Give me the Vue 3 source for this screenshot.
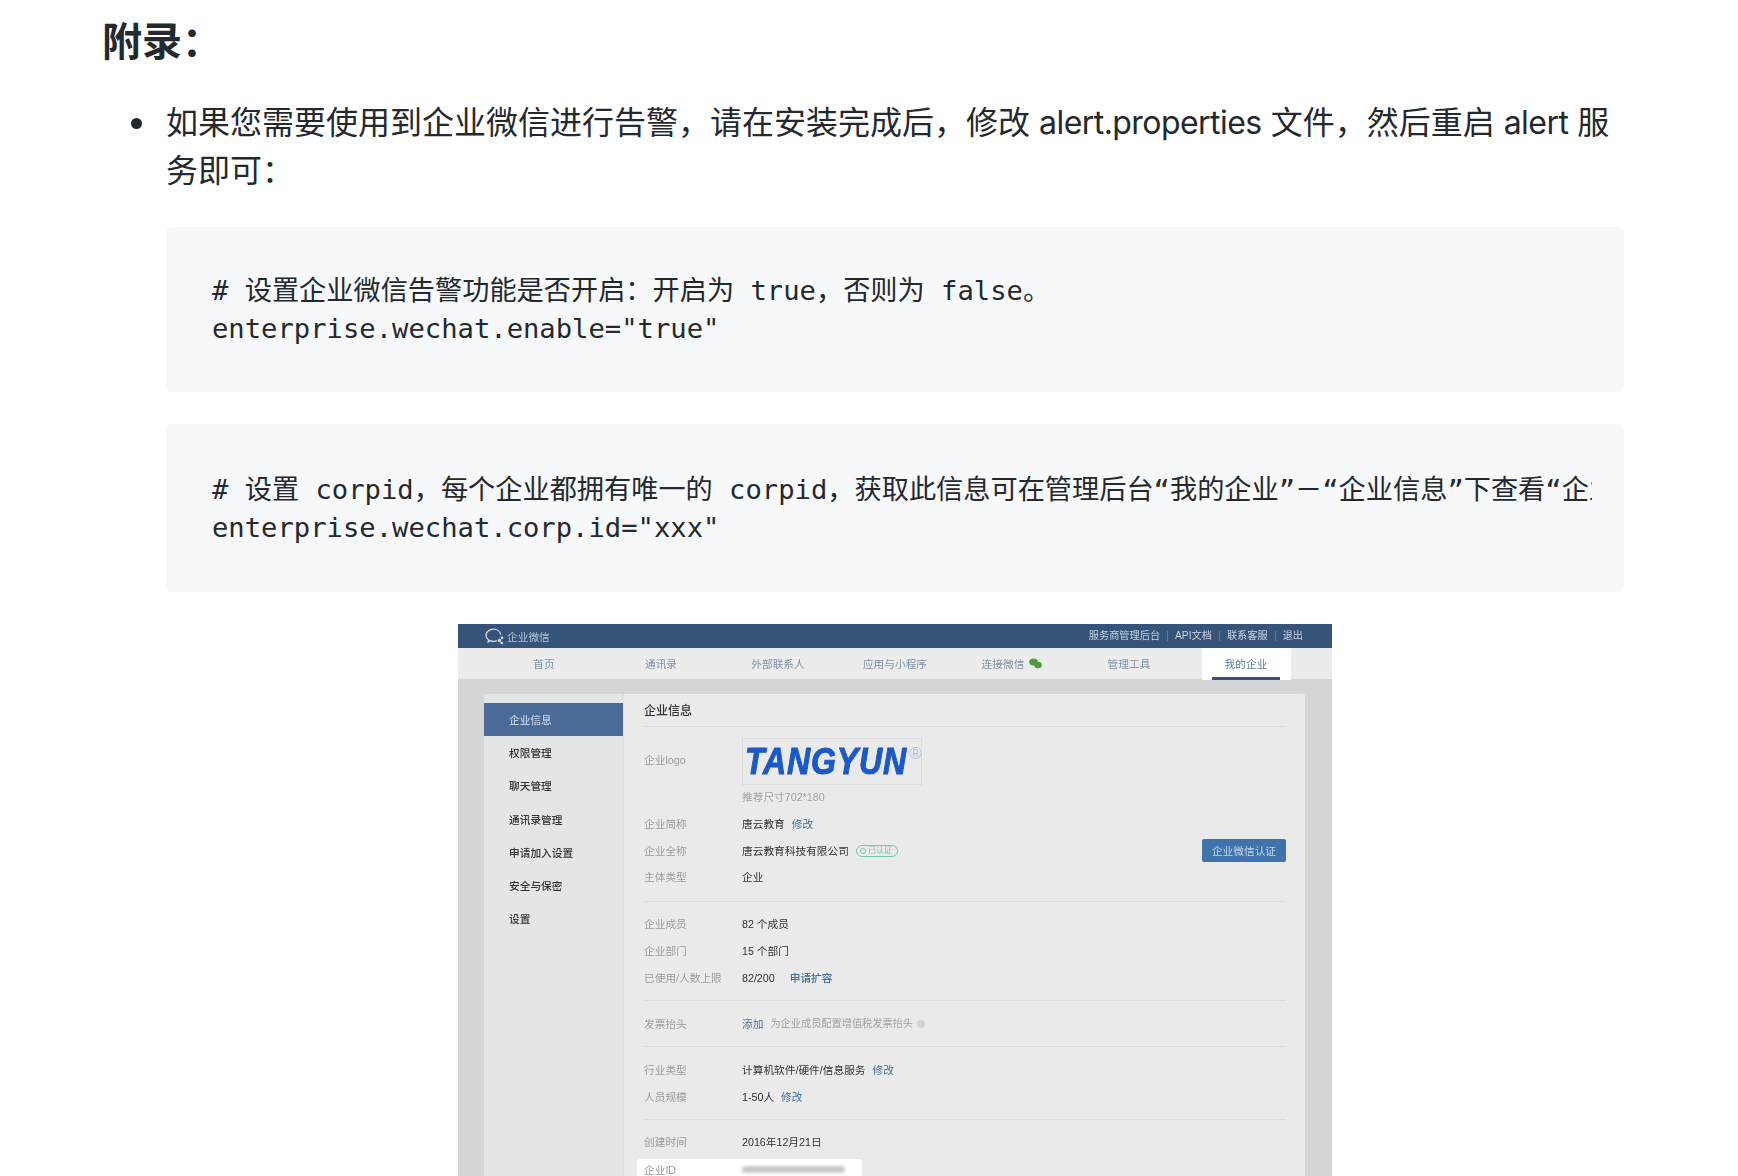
<script setup>
const tabs = ['首页', '通讯录', '外部联系人', '应用与小程序', '连接微信', '管理工具', '我的企业']
const side = ['企业信息', '权限管理', '聊天管理', '通讯录管理', '申请加入设置', '安全与保密', '设置']
</script>

<template>
  <div class="page">
    <h3 class="title">附录：</h3>
    <ul class="list">
      <li>
        <p class="lead">如果您需要使用到企业微信进行告警，请在安装完成后，修改 <span class="en">alert.properties</span> 文件，然后重启 <span class="en">alert</span> 服务即可：</p>
        <pre class="code"><code># 设置企业微信告警功能是否开启：开启为 true，否则为 false。
enterprise.wechat.enable="true"</code></pre>
        <pre class="code tall"><code># 设置 corpid，每个企业都拥有唯一的 corpid，获取此信息可在管理后台“我的企业”－“企业信息”下查看“企业 ID”（需要有管理员权限）
enterprise.wechat.corp.id="xxx"</code></pre>

        <div class="shot">
          <div class="topbar">
            <div class="brand">
              <svg width="19" height="18" viewBox="0 0 19 18" fill="none" stroke="#d5dde8" stroke-width="1.3">
                <path d="M8.5 1.2C4.4 1.2 1 3.9 1 7.3c0 1.9 1 3.5 2.6 4.6l-.5 2 2.3-1.1c1 .3 2 .5 3.1.5 1.3 0 2.4-.2 3.4-.7" />
                <path d="M8.5 1.2c3.6 0 6.7 2.3 7.3 5.3" />
                <circle cx="14.5" cy="12.5" r="1" />
                <circle cx="17" cy="9.8" r=".7" />
                <circle cx="16.8" cy="15" r=".7" />
              </svg>
              <span>企业微信</span>
            </div>
            <div class="toplinks">
              <span>服务商管理后台</span><i></i><span>API文档</span><i></i><span>联系客服</span><i></i><span>退出</span>
            </div>
          </div>
          <div class="nav">
            <div v-for="t in tabs" :key="t" class="tab" :class="{ on: t === '我的企业' }">
              <span>{{ t }}</span>
              <svg v-if="t === '连接微信'" class="wx" width="13" height="11" viewBox="0 0 13 11">
                <ellipse cx="4.6" cy="4" rx="4.4" ry="3.6" fill="#4f9a3c" />
                <ellipse cx="9" cy="7" rx="3.8" ry="3.2" fill="#4f9a3c" />
              </svg>
            </div>
          </div>
          <div class="panel">
            <aside class="side">
              <div v-for="s in side" :key="s" class="side-item" :class="{ on: s === '企业信息' }">{{ s }}</div>
            </aside>
            <main class="main">
              <div class="head">企业信息</div>

              <section class="sec sec-a">
                <div class="logo-row">
                  <span class="lab">企业logo</span>
                  <div class="logo"><b>TANGYUN</b><sup>®</sup></div>
                </div>
                <div class="hint">推荐尺寸702*180</div>
                <div class="row"><span class="lab">企业简称</span><span class="val">唐云教育</span><a class="link">修改</a></div>
                <div class="row">
                  <span class="lab">企业全称</span><span class="val">唐云教育科技有限公司</span>
                  <span class="badge"><em></em>已认证</span>
                  <button class="verify">企业微信认证</button>
                </div>
                <div class="row"><span class="lab">主体类型</span><span class="val">企业</span></div>
              </section>

              <section class="sec sec-b">
                <div class="row"><span class="lab">企业成员</span><span class="val">82 个成员</span></div>
                <div class="row"><span class="lab">企业部门</span><span class="val">15 个部门</span></div>
                <div class="row"><span class="lab">已使用/人数上限</span><span class="val">82/200</span><a class="link wide">申请扩容</a></div>
              </section>

              <section class="sec sec-c">
                <div class="row"><span class="lab">发票抬头</span><a class="link first">添加</a><span class="note">为企业成员配置增值税发票抬头</span><span class="info"></span></div>
              </section>

              <section class="sec sec-d">
                <div class="row"><span class="lab">行业类型</span><span class="val">计算机软件/硬件/信息服务</span><a class="link">修改</a></div>
                <div class="row"><span class="lab">人员规模</span><span class="val">1-50人</span><a class="link">修改</a></div>
              </section>

              <section class="sec sec-e">
                <div class="row"><span class="lab">创建时间</span><span class="val">2016年12月21日</span></div>
                <div class="row idrow"><span class="lab">企业ID</span><span class="smudge"></span></div>
              </section>
            </main>
          </div>
        </div>
      </li>
    </ul>
  </div>
</template>

<style scoped>
.page {
  height: 1176px;
  overflow: hidden;
  box-sizing: border-box;
  padding: 17px 114px 0 102px;
  background: #fff;
  color: #24292e;
  font-family: "Inter", "Noto Sans CJK SC", sans-serif;
  font-size: 32px;
  line-height: 48px;
}
.title {
  margin: 0;
  font-size: 40px;
  line-height: 50px;
  font-weight: 600;
}
.list {
  margin: 32px 0 0;
  padding: 0 0 0 64px;
  list-style: none;
}
.list li {
  position: relative;
}
.list li::before {
  content: "";
  position: absolute;
  left: -35px;
  top: 19px;
  width: 11px;
  height: 11px;
  border-radius: 50%;
  background: #24292e;
}
.lead {
  margin: 0;
}
.en {
  letter-spacing: -0.55px;
}
.code {
  margin: 32px 0 0;
  padding: 32px;
  background: #f6f8fa;
  border-radius: 6px;
  font-family: "DejaVu Sans Mono", "Noto Sans CJK SC", monospace;
  font-size: 27.2px;
  line-height: 38px;
}
.code code {
  display: block;
  overflow: hidden;
  padding: 13px 14px 12px;
  white-space: pre;
  font: inherit;
}
.code.tall {
  padding-top: 33.5px;
  padding-bottom: 33.5px;
}
.shot {
  width: 874px;
  margin: 32px auto 0;
  padding-bottom: 20px;
  background: #d4d5d7;
  font-family: "Liberation Sans", "Noto Sans CJK SC", sans-serif;
  font-size: 10.7px;
  line-height: 14px;
  filter: blur(0.55px);
}
.topbar {
  height: 24px;
  box-sizing: border-box;
  padding: 0 29px 0 27px;
  display: flex;
  align-items: center;
  justify-content: space-between;
  background: #36547a;
  color: #c9d3e0;
}
.brand {
  display: flex;
  align-items: center;
  gap: 3px;
  padding-top: 2px;
  color: #b5c3d5;
}
.toplinks {
  display: flex;
  align-items: center;
  font-size: 10.2px;
}
.toplinks i {
  width: 1px;
  height: 10px;
  margin: 0 7px;
  background: #62799a;
}
.nav {
  height: 31px;
  box-sizing: border-box;
  padding: 0 26px 0 27.5px;
  display: grid;
  grid-template-columns: repeat(7, 117px);
  background: #ececec;
  color: #7f92a9;
}
.tab {
  position: relative;
  display: flex;
  align-items: center;
  justify-content: center;
  gap: 5px;
}
.tab.on {
  margin: 0 14px -1px;
  background: #fff;
  color: #5f7b9e;
}
.tab.on::after {
  content: "";
  position: absolute;
  left: 10px;
  right: 11px;
  bottom: 0;
  height: 3px;
  background: #36547a;
}
.wx {
  flex: none;
}
.panel {
  margin: 15px 27px 0 26px;
  height: 520px;
  display: flex;
  background: #eaeaea;
  border-radius: 2px 2px 0 0;
  overflow: hidden;
}
.side {
  width: 140px;
  flex: none;
  box-sizing: border-box;
  padding-top: 9px;
  background: #e4e5e7;
  border-right: 1px dotted #d8d8d8;
  color: #333;
}
.side-item {
  height: 33.3px;
  display: flex;
  align-items: center;
  padding-left: 25px;
  font-weight: 500;
}
.side-item.on {
  background: #4a6b98;
  color: #c3d0e2;
}
.main {
  flex: 1;
  padding: 0 19px 0 20px;
  min-width: 0;
}
.head {
  height: 33px;
  box-sizing: border-box;
  padding-top: 10px;
  font-size: 12px;
  line-height: 14px;
  color: #333;
  font-weight: 500;
  border-bottom: 1px solid #dcdcdc;
}
.sec {
  border-bottom: 1px solid #dcdcdc;
}
.sec-a { padding: 11px 0 10.2px; }
.sec-b { padding: 9.5px 0 9px; }
.sec-c { padding: 9.5px 0 9.4px; }
.sec-d { padding: 9.2px 0 9.3px; }
.sec-e { padding: 9px 0 0; border-bottom: 0; }
.row {
  height: 26.6px;
  display: flex;
  align-items: center;
}
.lab {
  width: 98px;
  flex: none;
  color: #9b9b9b;
}
.val {
  color: #333;
}
.link {
  margin-left: 7px;
  color: #41709f;
}
.link.wide {
  margin-left: 15px;
  font-weight: 500;
}
.link.first {
  margin-left: 0;
}
.note {
  margin-left: 7px;
  color: #9f9f9f;
  font-size: 10.2px;
}
.info {
  width: 8px;
  height: 8px;
  margin-left: 4px;
  border-radius: 50%;
  background: #d3d3d3;
}
.logo-row {
  height: 47px;
  display: flex;
  align-items: center;
}
.logo-row .lab {
  padding-bottom: 4px;
}
.logo {
  width: 180px;
  height: 47px;
  box-sizing: border-box;
  display: flex;
  align-items: center;
  padding-left: 2px;
  border: 1px solid #dcdcdc;
}
.logo b {
  font-family: "Liberation Sans", sans-serif;
  font-size: 37px;
  line-height: 40px;
  font-style: italic;
  font-weight: 700;
  letter-spacing: 1px;
  color: #1b58c8;
  -webkit-text-stroke: 1px #1b58c8;
  transform: scaleX(0.865);
  transform-origin: left center;
  margin-right: -24px;
}
.logo sup {
  align-self: flex-start;
  margin: 6px 0 0 1px;
  font-size: 17px;
  line-height: 17px;
  color: #a9bfe6;
}
.hint {
  height: 25.7px;
  box-sizing: border-box;
  padding: 5px 0 0 98px;
  color: #a3a3a3;
}
.badge {
  margin-left: 7px;
  height: 12px;
  box-sizing: border-box;
  padding: 0 5px 0 3px;
  display: flex;
  align-items: center;
  gap: 2px;
  border: 1px solid #7cc8a4;
  border-radius: 6px;
  font-size: 8px;
  line-height: 10px;
  color: #7cc8a4;
}
.badge em {
  width: 6px;
  height: 6px;
  box-sizing: border-box;
  border: 1px solid #7cc8a4;
  border-radius: 50%;
}
.verify {
  width: 84px;
  height: 23px;
  margin-left: auto;
  padding: 0;
  border: 0;
  border-radius: 2px;
  background: #3f73ab;
  color: #c4d7ea;
  font: inherit;
}
.idrow {
  width: 225px;
  height: 22px;
  box-sizing: border-box;
  margin: 3px 0 0 -7px;
  padding-left: 7px;
  background: #fff;
  border-radius: 2px 2px 0 0;
}
.smudge {
  width: 103px;
  height: 7px;
  border-radius: 4px;
  background: #c9c9c9;
  filter: blur(1.5px);
}
</style>
